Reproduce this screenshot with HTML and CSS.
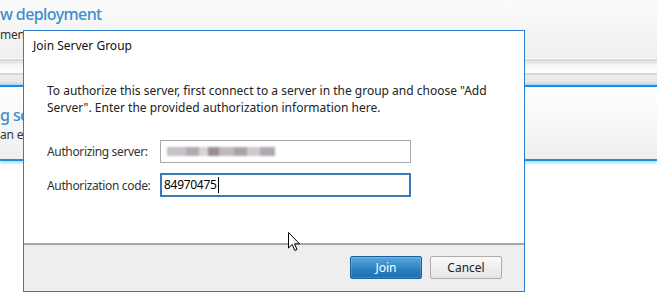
FILE: index.html
```html
<!DOCTYPE html>
<html lang="en">
<head>
  <meta charset="UTF-8" />
  <title>Join Server Group</title>
  <link rel="stylesheet" href="styles.css">
</head>
<body>
  <div class="page">
    <div class="page-header">
      <h1 class="page-title">w deployment</h1>
      <div class="page-sub">ment</div>
    </div>
    <div class="toolbar"></div>
    <div class="tabstrip"></div>
    <div class="section">
      <h2 class="section-title">g se</h2>
      <div class="section-sub">an ex</div>
    </div>
  </div>

  <div class="dialog">
    <div class="dialog-title">Join Server Group</div>
    <div class="dialog-body">
      <p class="intro">To authorize this server, first connect to a server in the group and choose "Add Server". Enter the provided authorization information here.</p>
      <div class="field">
        <label class="field-label">Authorizing server:</label>
        <div class="field-input"><span class="blurred"></span></div>
      </div>
      <div class="field">
        <label class="field-label">Authorization code:</label>
        <div class="field-input focused"><span class="value">84970475</span></div>
      </div>
    </div>
    <div class="dialog-footer">
      <button class="btn btn-primary">Join</button>
      <button class="btn">Cancel</button>
    </div>
  </div>

  <svg class="cursor" width="13" height="20" viewBox="0 0 13 20">
    <path d="M0.5 0.5 L0.5 16 L4.2 12.5 L6.8 18.5 L9 17.5 L6.5 11.8 L11.5 11.8 Z" fill="#fff" stroke="#000" stroke-width="1" stroke-linejoin="miter"/>
  </svg>
</body>
</html>
```

FILE: styles.css
```css
* {
  box-sizing: border-box;
}

body {
  margin: 0;
  width: 657px;
  height: 306px;
  overflow: hidden;
  background: #ffffff;
  font-family: "Segoe UI", "Noto Sans", sans-serif;
  font-size: 12px;
  color: #1e1e1e;
  position: relative;
}

.page-header {
  height: 58px;
  background: linear-gradient(#fbfbfb, #efefef);
  padding-top: 4px;
}

.page-title {
  margin: 0;
  font-size: 16px;
  font-weight: 500;
  letter-spacing: -0.6px;
  color: #3b8fd0;
  line-height: 21px;
}

.page-sub {
  margin-top: 2px;
  color: #333;
  line-height: 16px;
  letter-spacing: -0.2px;
}

.toolbar {
  height: 15px;
  border-top: 1px solid #ffffff;
  background: linear-gradient(#d4d4d4, #f4f4f4 40%, #ffffff);
}

.tabstrip {
  height: 14px;
  border-top: 2px solid #d6d6d6;
  border-bottom: 2px solid #1d8ee3;
  background: linear-gradient(#eeeeee, #e6e6e6 70%, #a9d2f3);
}

.section {
  height: 74px;
  padding-top: 18px;
  background: linear-gradient(#ffffff, #efefef);
  border-bottom: 2px solid #1d8ee3;
  box-shadow: 0 2px 3px rgba(29, 142, 227, 0.35);
}

.section-title {
  margin: 0;
  font-size: 16px;
  font-weight: 500;
  letter-spacing: -0.6px;
  color: #3b8fd0;
  line-height: 21px;
}

.section-sub {
  color: #333;
  line-height: 18px;
  letter-spacing: -0.2px;
}

.dialog {
  position: absolute;
  left: 23px;
  top: 30px;
  width: 502px;
  height: 262px;
  border: 1px solid #2b7fd0;
  background: #ffffff;
  display: flex;
  flex-direction: column;
}

.dialog-title {
  padding: 6px 0 0 9px;
  line-height: 18px;
  color: #111;
}

.dialog-body {
  flex: 1;
  padding: 27px 10px 0 23px;
}

.intro {
  margin: 0 0 24px;
  line-height: 17px;
  width: 472px;
  color: #222;
}

.field {
  display: flex;
  align-items: center;
  margin-bottom: 10px;
}

.field-label {
  width: 113px;
  flex-shrink: 0;
  white-space: nowrap;
  letter-spacing: -0.35px;
  color: #333;
}

.field-input {
  width: 251px;
  height: 23px;
  border: 1px solid #a9a9a9;
  display: flex;
  align-items: center;
  padding-left: 3px;
}

.field-input.focused {
  height: 24px;
  border-color: #3a79b7;
  border-width: 2px;
  padding-left: 2px;
}

.blurred {
  display: block;
  margin-left: 3px;
  width: 108px;
  height: 9px;
  filter: blur(1.2px);
  background: linear-gradient(90deg, #c8c0c8 0 18%, #b3a9b0 18% 30%, #d8d4d8 30% 38%, #9a8f96 38% 48%, #c0b8bc 48% 62%, #a9a2a6 62% 74%, #d0c8cc 74% 86%, #b0a8b0 86% 100%);
}

.value {
  color: #000;
  padding-right: 1px;
  border-right: 1px solid #000;
  line-height: 16px;
  letter-spacing: -0.3px;
}

.dialog-footer {
  height: 48px;
  border-top: 2px solid #a3a8ad;
  background: #eeeeee;
  display: flex;
  justify-content: flex-end;
  align-items: center;
  gap: 8px;
  padding: 0 22px 2px 0;
}

.btn {
  width: 72px;
  height: 23px;
  font-family: inherit;
  font-size: 12px;
  color: #222;
  border: 1px solid #adadad;
  border-radius: 2px;
  background: linear-gradient(#fafafa, #e4e4e4);
  padding: 0;
}

.btn-primary {
  color: #ffffff;
  border-color: #1b5f9c;
  background: linear-gradient(#5aa9dc, #2a7fc0 60%, #1f6db0);
  box-shadow: inset 0 0 0 1px rgba(255, 255, 255, 0.15);
}

.cursor {
  position: absolute;
  left: 288px;
  top: 232px;
}
```
